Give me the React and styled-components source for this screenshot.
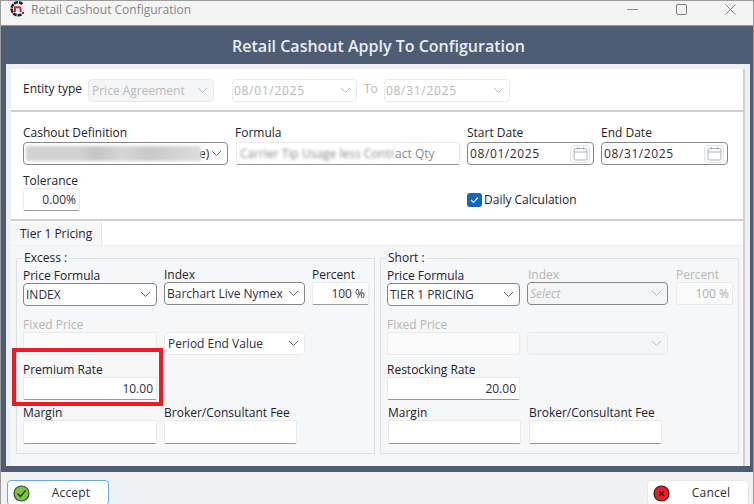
import React from "react";
import styled, { createGlobalStyle } from "styled-components";

const Global = createGlobalStyle`
  html, body { margin: 0; padding: 0; background: #fff; }
  body { font-family: "Open Sans", "Noto Sans", sans-serif; }
  * { box-sizing: border-box; }
`;

const Window = styled.div`
  position: relative; width: 754px; height: 504px; overflow: hidden;
  display: flex; flex-direction: column;
  border: 1px solid #9c9c9c; border-bottom: 0; background: #f0f0f0;
  font-size: 12px; color: #2e2e38;
`;
const TitleBar = styled.div`
  height: 25px; flex: none; display: flex; align-items: center;
  padding-left: 8px; background: #f4f4f4; border-bottom: 1px solid #8e97a3;
`;
const TitleText = styled.span`
  margin-left: 5px; font-size: 12px; color: #858585; flex: 1; margin-top: -7px;
`;
const WinButtons = styled.div`
  display: flex; align-items: center; gap: 38px; padding-right: 17px; margin-top: -8px;
  svg { display: block; }
`;
const Shell = styled.div`
  height: 446px; flex: none; display: flex; flex-direction: column;
  background: #4e5c74; padding: 0 3px 6px 5px;
`;
const Heading = styled.h1`
  margin: 0; height: 38px; flex: none; display: flex; align-items: center; justify-content: center;
  font-size: 16px; font-weight: 600; color: #e9edf2; padding: 2px 0 0 1px;
`;
const Panel = styled.div`
  flex: 1; min-height: 0; background: #edeff2; padding: 5px 5px 0 5px;
  display: flex; flex-direction: column;
`;
const Inner = styled.div`
  flex: 1; background: #fff; border-right: 2px solid #cfd0d2; display: flex; flex-direction: column;
`;
const TopRow = styled.div`
  height: 43px; flex: none; display: flex; align-items: center;
  padding: 1px 0 0 12px; border-bottom: 2px solid #cfcfcf;
`;
const TopLabel = styled.span`
  width: 65px; font-weight: 500; font-size: 12px; margin-top: -4px; color: #22222c;
`;
const ToLabel = styled.span`
  width: 27px; text-align: left; padding-left: 7px; color: #b8b8b8; font-size: 12px; margin-top: -3px;
`;
const Control = styled.div`
  width: ${p => p.$w}px; height: ${p => p.$h || 23}px; flex: none;
  display: flex; align-items: center; padding: 0 ${p => p.$pr ?? 5}px 0 ${p => p.$pl ?? 2}px;
  font-size: 12px; letter-spacing: ${p => p.$ls || 0}px;
  border-radius: 4px; color: ${p => (p.$off ? "#b9b9b9" : "#2e2e38")};
  background: ${p => (p.$fill ? "#f4f5f6" : "#fff")};
  border: 1px solid ${p => (p.$strong ? "#85878a" : "#e9e9e9")};
  font-style: ${p => (p.$italic ? "italic" : "normal")};
  margin-left: ${p => p.$ml || 0}px;
  margin-bottom: ${p => p.$mb || 0}px;
`;
const ControlText = styled.span`
  flex: 1; white-space: nowrap; overflow: hidden;
`;
const TextBox = styled.div`
  width: ${p => p.$w}px; height: ${p => p.$h || 23}px; flex: none;
  display: flex; align-items: center; justify-content: ${p => (p.$left ? "flex-start" : "flex-end")};
  padding: 0 3px; font-size: 12px; background: ${p => (p.$off ? "#fbfbfb" : "#fff")};
  color: ${p => (p.$off ? "#b0b0b0" : "#2e2e38")};
  border: 1px solid #eaeaea; border-radius: 2px;
  border-bottom: 1px solid ${p => (p.$off ? "#eaeaea" : "#9a9a9a")};
  margin-bottom: ${p => p.$mb || 0}px;
  white-space: nowrap; overflow: hidden;
`;
const DefinitionGrid = styled.div`
  padding: 11px 0 0 12px; display: grid; height: 109px; flex: none;
  grid-template-columns: 206px 224px 127px 127px; column-gap: 7px;
  grid-template-rows: 42px 46px; align-content: start;
  border-bottom: 2px solid #cfcfcf;
`;
const Field = styled.div`
  display: flex; flex-direction: column; justify-content: flex-end; min-width: 0;
  margin-left: ${p => p.$ml || 0}px;
`;
const FieldLabel = styled.label`
  height: 14px; line-height: 14px; margin-bottom: ${p => p.$gap ?? 1}px; font-size: 12px; font-weight: 500;
  margin-left: ${p => p.$ml || 0}px;
  white-space: nowrap; color: ${p => (p.$off ? "#b5b5b5" : "#22222c")};
`;
const Blurred = styled.span`
  display: inline-block; filter: blur(1.5px);
  background: linear-gradient(90deg, #d2d2d2 0 30%, #c4c4c4 40%, #d6d6d6 55%, #c8c8c8 70%, #dcdcdc 100%);
  width: ${p => p.$w}px; height: ${p => p.$h}px; flex: none;
`;
const BlurText = styled.span`
  filter: blur(1.4px); color: #8b8b8b;
`;
const ClearText = styled.span`
  color: #8b8b8b;
`;
const EndText = styled.span`
  flex: 1; margin-left: -2px; white-space: nowrap;
`;
const CalButton = styled.span`
  width: 20px; height: 18px; display: flex; align-items: center; justify-content: center;
  border: 1px solid #e3e3e3; border-radius: 4px; flex: none;
`;
const CheckRow = styled.div`
  grid-column: 3 / 5; display: flex; align-items: center; gap: 2px; padding-top: 23px;
  font-size: 12px; font-weight: 500; color: #22222c;
`;
const CheckBox = styled.span`
  width: 15px; height: 14px; border-radius: 3px; background: #1467b8; flex: none;
  display: flex; align-items: center; justify-content: center;
`;
const TabStrip = styled.div`
  height: 24px; flex: none; display: flex; padding-top: 1px;
`;
const Tab = styled.div`
  width: 91px; background: #f6f7f8; border-right: 1px solid #e6e6e6;
  padding: 3px 0 0 9px; font-size: 12px; font-weight: 500; color: #22222c;
`;
const TabBody = styled.div`
  flex: 1; background: #f6f7f8; border-top: 1px solid #eeeeee; padding: 5px 4px 0 5px;
  display: flex; gap: 5px;
`;
const Group = styled.fieldset`
  margin: 0; padding: 0 0 0 6px; flex: none; width: 359px; height: 203px; min-width: 0;
  border: 1px solid #dedfe1; border-radius: 1px;
`;
const Legend = styled.legend`
  margin-left: -1px; padding: 0 2px; font-size: 12px; font-weight: 500; line-height: 14px; color: #22222c;
  height: 14px;
`;
const GroupGrid = styled.div`
  display: grid; margin-top: 2px;
  grid-template-columns: ${p => (p.$right ? "133px 141px 57px" : "134px 141px 57px")};
  column-gap: 7px;
  grid-template-rows: 39px 49px 45px 44px;
`;
const Footer = styled.div`
  flex: 1; display: flex; justify-content: space-between; align-items: flex-start;
  padding: 8px 4px 0 6px; background: #f0f1f3;
`;
const FootButton = styled.button`
  width: 102px; height: 26px; padding: 0 0 0 5px; display: flex; align-items: center;
  background: #fff; border-radius: 4px; font: 500 12px "Open Sans", sans-serif; color: #2e2e38;
  border: 1px solid ${p => (p.$primary ? "#6aa9de" : "#e8e8e8")};
  svg { flex: none; }
  span { flex: 1; text-align: center; padding-left: 4px; margin-top: -2px; letter-spacing: .2px; }
`;
const Highlight = styled.div`
  position: absolute; left: 11px; top: 347px; width: 151px; height: 58px;
  border: 4px solid #ed1c24; pointer-events: none;
`;

const Chevron = ({ off }) => (
  <svg width="11" height="7" viewBox="0 0 11 7" fill="none" style={{ flex: "none" }}>
    <path d="M1 1l4.5 4.5L10 1" stroke={off ? "#b8b8b8" : "#666"} strokeWidth="1" />
  </svg>
);
const Calendar = () => (
  <svg width="15" height="15" viewBox="0 0 15 15" fill="none" stroke="#a7b4c4" strokeWidth="1">
    <rect x="1" y="2.5" width="13" height="11.5" rx="1.5" />
    <path d="M1 6h13M4.5 1v2.5M10.5 1v2.5" />
  </svg>
);
const Logo = () => (
  <svg width="17" height="16" viewBox="0 0 17 16" fill="none" style={{ marginTop: -9 }}>
    <path d="M13.5 3A6.5 6.5 0 1 0 13 13" stroke="#1c2233" strokeWidth="2.6" strokeDasharray="4 .8" />
    <path d="M6 11V6.2h4.2c1 0 1.4.6 1.4 1.4V11" stroke="#d8232a" strokeWidth="2" />
    <circle cx="14" cy="12" r="1.1" fill="#1c2233" />
  </svg>
);

function Select({ w, text, off, strong = true, italic, mb, fill, pl }) {
  return (
    <Control $w={w} $strong={strong} $off={off} $italic={italic} $mb={mb} $fill={fill} $pl={pl}>
      <ControlText>{text}</ControlText>
      <Chevron off={off} />
    </Control>
  );
}

function PricingGroup({ legend, right, formula, indexText, indexOff, percentOff, period, periodOff, rateLabel, rateValue }) {
  return (
    <Group>
      <Legend>{legend}</Legend>
      <GroupGrid $right={right}>
        <Field>
          <FieldLabel $gap={0}>Price Formula</FieldLabel>
          <Select w={right ? 133 : 134} text={formula} />
        </Field>
        <Field>
          <FieldLabel $gap={0} $off={indexOff} $ml={right ? 1 : 0}>Index</FieldLabel>
          <Select w={141} text={indexText} off={indexOff} italic={indexOff} mb={1} fill={indexOff} />
        </Field>
        <Field $ml={right ? 1 : 0}>
          <FieldLabel $gap={0} $off={percentOff}>Percent</FieldLabel>
          <TextBox $w={57} $off={percentOff} $mb={1}>100 %</TextBox>
        </Field>

        <Field>
          <FieldLabel $gap={0} $off>Fixed Price</FieldLabel>
          <TextBox $w={right ? 133 : 134} $off />
        </Field>
        <Field>
          <Select w={141} text={period} off={periodOff} strong={false} fill={periodOff} pl={3} />
        </Field>
        <span />

        <Field>
          <FieldLabel $gap={0}>{rateLabel}</FieldLabel>
          <TextBox $w={right ? 133 : 134}>{rateValue}</TextBox>
        </Field>
        <span />
        <span />

        <Field $ml={right ? 1 : 0}>
          <FieldLabel $gap={0}>Margin</FieldLabel>
          <TextBox $w={right ? 133 : 134} $h={24} />
        </Field>
        <Field $ml={right ? 2 : 0}>
          <FieldLabel $gap={0}>Broker/Consultant Fee</FieldLabel>
          <TextBox $w={133} $h={24} />
        </Field>
        <span />
      </GroupGrid>
    </Group>
  );
}

export default function App() {
  return (
    <>
      <Global />
      <Window>
        <TitleBar>
          <Logo />
          <TitleText>Retail Cashout Configuration</TitleText>
          <WinButtons>
            <svg width="11" height="11" viewBox="0 0 11 11" stroke="#8c8c8c" fill="none"><path d="M0 5.5h11" /></svg>
            <svg width="11" height="11" viewBox="0 0 11 11" stroke="#7f7f7f" fill="none"><rect x=".5" y=".5" width="10" height="10" rx="1.5" /></svg>
            <svg width="11" height="11" viewBox="0 0 11 11" stroke="#7f7f7f" fill="none"><path d="M.5.5l10 10M10.5.5l-10 10" /></svg>
          </WinButtons>
        </TitleBar>
        <Shell>
          <Heading>Retail Cashout Apply To Configuration</Heading>
          <Panel>
            <Inner>
              <TopRow>
                <TopLabel>Entity type</TopLabel>
                <Select w={126} text="Price Agreement" off strong={false} fill pl={3} />
                <Control $w={125} $ml={18} $off $ls={0.7} $pl={1}>
                  <ControlText>08/01/2025</ControlText>
                  <Chevron off />
                </Control>
                <ToLabel>To</ToLabel>
                <Control $w={126} $off $ls={0.7} $pl={1}>
                  <ControlText>08/31/2025</ControlText>
                  <Chevron off />
                </Control>
              </TopRow>
              <DefinitionGrid>
                <Field>
                  <FieldLabel $gap={2}>Cashout Definition</FieldLabel>
                  <Control $w={205} $strong>
                    <Blurred $w={175} $h={15} />
                    <EndText>e)</EndText>
                    <Chevron />
                  </Control>
                </Field>
                <Field>
                  <FieldLabel $gap={2} $ml={-1}>Formula</FieldLabel>
                  <TextBox $w={224} $left>
                    <BlurText>Carrier Tip Usage less Contr</BlurText>
                    <ClearText>act Qty</ClearText>
                  </TextBox>
                </Field>
                <Field>
                  <FieldLabel $gap={2}>Start Date</FieldLabel>
                  <Control $w={127} $strong $ls={0.6} $pr={3}>
                    <ControlText>08/01/2025</ControlText>
                    <CalButton><Calendar /></CalButton>
                  </Control>
                </Field>
                <Field>
                  <FieldLabel $gap={2}>End Date</FieldLabel>
                  <Control $w={127} $strong $ls={0.6} $pr={3}>
                    <ControlText>08/31/2025</ControlText>
                    <CalButton><Calendar /></CalButton>
                  </Control>
                </Field>
                <Field>
                  <FieldLabel $gap={0}>Tolerance</FieldLabel>
                  <TextBox $w={57}>0.00%</TextBox>
                </Field>
                <span />
                <CheckRow>
                  <CheckBox>
                    <svg width="9" height="8" viewBox="0 0 9 8" fill="none"><path d="M1 4l2.5 2.5L8 1.5" stroke="#dfeeff" strokeWidth="1.2" /></svg>
                  </CheckBox>
                  Daily Calculation
                </CheckRow>
              </DefinitionGrid>
              <TabStrip><Tab>Tier 1 Pricing</Tab></TabStrip>
              <TabBody>
                <PricingGroup
                  legend="Excess :"
                  formula="INDEX"
                  indexText="Barchart Live Nymex"
                  period="Period End Value"
                  rateLabel="Premium Rate"
                  rateValue="10.00"
                />
                <PricingGroup
                  right
                  legend="Short :"
                  formula="TIER 1 PRICING"
                  indexText="Select"
                  indexOff
                  percentOff
                  period=""
                  periodOff
                  rateLabel="Restocking Rate"
                  rateValue="20.00"
                />
              </TabBody>
            </Inner>
          </Panel>
        </Shell>
        <Footer>
          <FootButton $primary>
            <svg width="17" height="17" viewBox="0 0 17 17">
              <circle cx="8.5" cy="8.5" r="7.5" fill="#7cc242" stroke="#33502a" strokeWidth="1.2" />
              <path d="M4.5 8.5l3 3 5-6" fill="none" stroke="#1f3a1a" strokeWidth="1.4" />
            </svg>
            <span>Accept</span>
          </FootButton>
          <FootButton>
            <svg width="17" height="17" viewBox="0 0 17 17">
              <circle cx="8.5" cy="8.5" r="7.5" fill="#ee1c25" stroke="#3a1a1a" strokeWidth="1.2" />
              <path d="M6 6l5 5M11 6l-5 5" fill="none" stroke="#401010" strokeWidth="1.3" />
            </svg>
            <span>Cancel</span>
          </FootButton>
        </Footer>
        <Highlight />
      </Window>
    </>
  );
}
